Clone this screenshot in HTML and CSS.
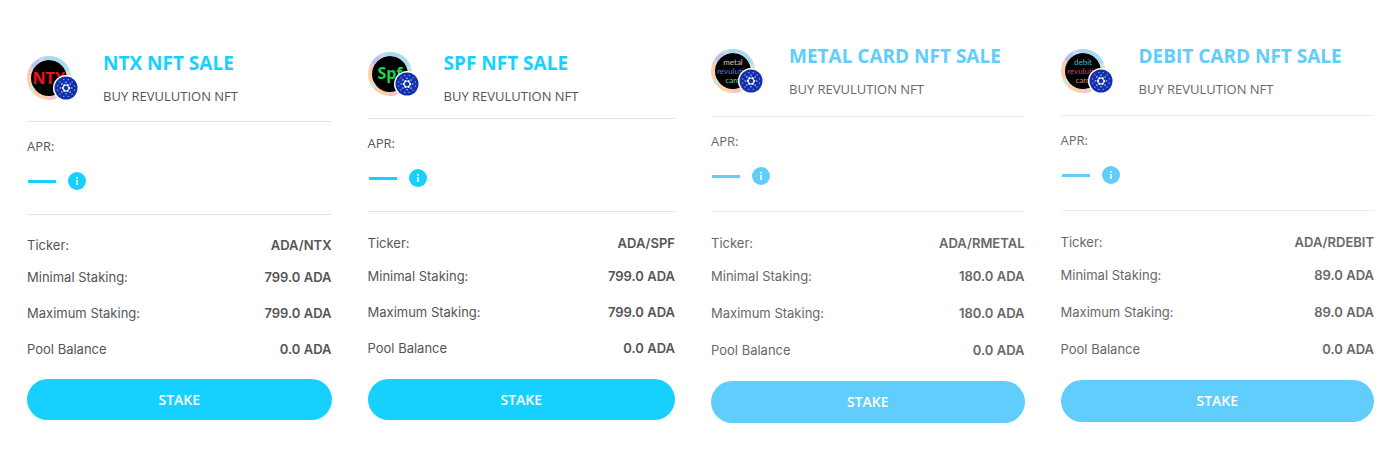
FILE: index.html
```html
<!DOCTYPE html>
<html lang="en">
<head>
<meta charset="utf-8">
<meta name="viewport" content="width=device-width, initial-scale=1">
<title>Revulution NFT sales</title>
<link rel="stylesheet" href="styles.css">
</head>
<body>
<svg class="sprite" aria-hidden="true">
  <symbol id="disc" viewBox="0 0 44 44">
    <circle cx="22" cy="22" r="20" fill="#000"/>
    <g fill="none" stroke-width="4">
      <circle cx="22" cy="22" r="20" stroke="#fbcfa9"/>
      <circle cx="22" cy="22" r="20" pathLength="100" stroke="#a6dcf3" stroke-dasharray="25 75" stroke-dashoffset="-69"/>
      <circle cx="22" cy="22" r="20" pathLength="100" stroke="#b3c4f1" stroke-dasharray="8 92" stroke-dashoffset="-59"/>
      <circle cx="22" cy="22" r="20" pathLength="100" stroke="#f3c3df" stroke-dasharray="3 97" stroke-dashoffset="-55"/>
      <circle cx="22" cy="22" r="20" pathLength="100" stroke="#c4ecd9" stroke-dasharray="4 96" stroke-dashoffset="-39"/>
      <circle cx="22" cy="22" r="20" pathLength="100" stroke="#f0c2dc" stroke-dasharray="5 95" stroke-dashoffset="-20"/>
      <circle cx="22" cy="22" r="20" pathLength="100" stroke="#bfeadf" stroke-dasharray="3 97" stroke-dashoffset="-94"/>
      <circle cx="22" cy="22" r="20" pathLength="100" stroke="#c9d6f4" stroke-dasharray="4 96" stroke-dashoffset="-67"/>
    </g>
  </symbol>
  <symbol id="cardano" viewBox="0 0 26 26">
    <circle cx="13" cy="13" r="13" fill="#fff"/>
    <circle cx="13" cy="13" r="11.5" fill="#1130ad"/>
    <g fill="none" stroke="#fff" stroke-linecap="round">
      <circle cx="13" cy="13" r="3.2" stroke-width="2.2" pathLength="60" stroke-dasharray="0.1 9.9"/>
      <circle cx="13" cy="13" r="3" stroke-width="1.2" opacity=".7"/>
      <circle cx="13" cy="13" r="5.8" stroke-width="1.4" pathLength="80" stroke-dasharray="0.1 9.9" opacity=".85"/>
      <circle cx="13" cy="13" r="8.6" stroke-width="1.2" pathLength="120" stroke-dasharray="0.1 9.9" stroke-dashoffset="5" opacity=".7"/>
    </g>
  </symbol>
  <symbol id="info" viewBox="0 0 18 18">
    <circle cx="9" cy="9" r="9" fill="currentColor"/>
    <circle cx="9" cy="5.8" r="1" fill="#fff"/>
    <path d="M8 8h1.8v5H8.3V9H8z" fill="#fff"/>
  </symbol>
</svg>

<main class="pools">
  <article class="card card--ntx">
    <header class="card__head">
      <svg class="logo" viewBox="0 0 52 46" role="img" aria-label="NTX on Cardano">
        <use href="#disc" width="44" height="44"/>
        <text class="logo__ntx" x="22" y="28">NTX</text>
        <use href="#cardano" x="26" y="19" width="26" height="26"/>
      </svg>
      <div class="card__names">
        <h2 class="card__title">NTX NFT SALE</h2>
        <p class="card__sub">BUY REVULUTION NFT</p>
      </div>
    </header>
    <section class="apr">
      <p class="apr__label">APR:</p>
      <div class="apr__value">
        <span class="apr__dash"></span>
        <button class="apr__info" type="button" aria-label="About APR"><svg class="apr__icon"><use href="#info"/></svg></button>
      </div>
    </section>
    <dl class="facts">
      <div class="fact"><dt>Ticker:</dt><dd>ADA/NTX</dd></div>
      <div class="fact"><dt>Minimal Staking:</dt><dd>799.0 ADA</dd></div>
      <div class="fact"><dt>Maximum Staking:</dt><dd>799.0 ADA</dd></div>
      <div class="fact"><dt>Pool Balance</dt><dd>0.0 ADA</dd></div>
    </dl>
    <button class="stake" type="button">STAKE</button>
  </article>

  <article class="card card--spf">
    <header class="card__head">
      <svg class="logo" viewBox="0 0 52 46" role="img" aria-label="SPF on Cardano">
        <use href="#disc" width="44" height="44"/>
        <text class="logo__spf" x="22" y="27">Spf</text>
        <use href="#cardano" x="26" y="19" width="26" height="26"/>
      </svg>
      <div class="card__names">
        <h2 class="card__title">SPF NFT SALE</h2>
        <p class="card__sub">BUY REVULUTION NFT</p>
      </div>
    </header>
    <section class="apr">
      <p class="apr__label">APR:</p>
      <div class="apr__value">
        <span class="apr__dash"></span>
        <button class="apr__info" type="button" aria-label="About APR"><svg class="apr__icon"><use href="#info"/></svg></button>
      </div>
    </section>
    <dl class="facts">
      <div class="fact"><dt>Ticker:</dt><dd>ADA/SPF</dd></div>
      <div class="fact"><dt>Minimal Staking:</dt><dd>799.0 ADA</dd></div>
      <div class="fact"><dt>Maximum Staking:</dt><dd>799.0 ADA</dd></div>
      <div class="fact"><dt>Pool Balance</dt><dd>0.0 ADA</dd></div>
    </dl>
    <button class="stake" type="button">STAKE</button>
  </article>

  <article class="card card--soft card--metal">
    <header class="card__head">
      <svg class="logo" viewBox="0 0 52 46" role="img" aria-label="Metal card on Cardano">
        <use href="#disc" width="44" height="44"/>
        <g class="logo__lines">
          <text x="22" y="16" fill="#c9c9c9">metal</text>
          <text x="24" y="25" fill="#4d7fe0">revulution</text>
          <text x="22" y="34" fill="#5fd0a5">card</text>
        </g>
        <use href="#cardano" x="27" y="19" width="26" height="26"/>
      </svg>
      <div class="card__names">
        <h2 class="card__title">METAL CARD NFT SALE</h2>
        <p class="card__sub">BUY REVULUTION NFT</p>
      </div>
    </header>
    <section class="apr">
      <p class="apr__label">APR:</p>
      <div class="apr__value">
        <span class="apr__dash"></span>
        <button class="apr__info" type="button" aria-label="About APR"><svg class="apr__icon"><use href="#info"/></svg></button>
      </div>
    </section>
    <dl class="facts">
      <div class="fact"><dt>Ticker:</dt><dd>ADA/RMETAL</dd></div>
      <div class="fact"><dt>Minimal Staking:</dt><dd>180.0 ADA</dd></div>
      <div class="fact"><dt>Maximum Staking:</dt><dd>180.0 ADA</dd></div>
      <div class="fact"><dt>Pool Balance</dt><dd>0.0 ADA</dd></div>
    </dl>
    <button class="stake" type="button">STAKE</button>
  </article>

  <article class="card card--soft card--debit">
    <header class="card__head">
      <svg class="logo" viewBox="0 0 52 46" role="img" aria-label="Debit card on Cardano">
        <use href="#disc" width="44" height="44"/>
        <g class="logo__lines">
          <text x="22" y="16" fill="#3fb4dc">debit</text>
          <text x="24" y="25" fill="#c8407f">revulution</text>
          <text x="22" y="34" fill="#d98a45">card</text>
        </g>
        <use href="#cardano" x="27" y="19" width="26" height="26"/>
      </svg>
      <div class="card__names">
        <h2 class="card__title">DEBIT CARD NFT SALE</h2>
        <p class="card__sub">BUY REVULUTION NFT</p>
      </div>
    </header>
    <section class="apr">
      <p class="apr__label">APR:</p>
      <div class="apr__value">
        <span class="apr__dash"></span>
        <button class="apr__info" type="button" aria-label="About APR"><svg class="apr__icon"><use href="#info"/></svg></button>
      </div>
    </section>
    <dl class="facts">
      <div class="fact"><dt>Ticker:</dt><dd>ADA/RDEBIT</dd></div>
      <div class="fact"><dt>Minimal Staking:</dt><dd>89.0 ADA</dd></div>
      <div class="fact"><dt>Maximum Staking:</dt><dd>89.0 ADA</dd></div>
      <div class="fact"><dt>Pool Balance</dt><dd>0.0 ADA</dd></div>
    </dl>
    <button class="stake" type="button">STAKE</button>
  </article>
</main>
</body>
</html>
```
FILE: styles.css
```css
* {
  box-sizing: border-box;
}

body,
h2,
p,
dl,
dd {
  margin: 0;
}

body {
  background: #fff;
  font-family: "Open Sans", sans-serif;
}

button {
  border: 0;
  padding: 0;
  font: inherit;
  cursor: pointer;
}

.sprite {
  position: absolute;
  width: 0;
  height: 0;
}

.pools {
  display: grid;
  grid-template-columns: 305fr 308fr 314fr 314fr;
  gap: 36px;
  align-items: start;
  padding: 43px 26px 40px 27px;
}

.card {
  --accent: #16d1ff;
  --text: #555;
  --line: #e4e4e4;
  display: flex;
  flex-direction: column;
  padding-top: 7px;
  color: var(--text);
  font-size: 13px;
  line-height: 20px;
}

.card--soft {
  --accent: #60cdfc;
  --text: #686868;
  --line: #ececec;
  padding-top: 0;
}

.card__head {
  display: flex;
  align-items: flex-start;
  gap: 24px;
  padding-bottom: 15px;
  border-bottom: 1px solid var(--line);
}

.card--spf .card__head {
  padding-bottom: 12px;
}

.card--metal .card__head {
  padding-bottom: 17px;
}

.card--debit .card__head {
  padding-bottom: 16px;
}

.card--soft .card__head {
  gap: 26px;
}

.logo {
  flex: none;
  width: 52px;
  height: 46px;
  margin-top: 6px;
  overflow: visible;
  text-anchor: middle;
}

.card--spf .logo {
  margin-top: 2px;
}

.logo__ntx {
  fill: #f0101c;
  font-size: 16px;
  font-weight: 700;
}

.logo__spf {
  fill: #17d64b;
  font-size: 16px;
  font-weight: 700;
}

.logo__lines {
  font-family: Lato, sans-serif;
  font-size: 8px;
}

.card__names {
  display: grid;
  gap: 10px;
}

.card__title {
  color: var(--accent);
  font-size: 19px;
  font-weight: 700;
  line-height: 26px;
}

.apr {
  display: grid;
  gap: 15px;
  padding: 14px 0 23px;
  border-bottom: 1px solid var(--line);
}

.card--soft .apr {
  padding-bottom: 25px;
}

.apr__value {
  display: flex;
  align-items: center;
  gap: 12px;
  height: 20px;
  padding-left: 1px;
  color: var(--accent);
}

.apr__dash {
  width: 28px;
  height: 3px;
  background: currentColor;
}

.apr__info {
  display: flex;
  background: none;
  color: inherit;
}

.apr__icon {
  width: 18px;
  height: 18px;
}

.facts {
  display: grid;
  gap: 16px;
  padding: 20px 0;
  font-family: Inter, sans-serif;
}

.fact {
  display: flex;
  justify-content: space-between;
}

.fact:first-child {
  margin-bottom: -4px;
}

.fact dd {
  font-weight: 600;
}

.card--soft .facts {
  gap: 17px;
  padding: 21px 0;
}

.card--spf .facts {
  padding: 21px 0;
}

.card--spf .fact:first-child {
  margin-bottom: -3px;
}

.stake {
  height: 41px;
  border-radius: 21px;
  background: var(--accent);
  color: #fff;
  font-size: 14px;
  font-weight: 600;
}

.card--soft .stake {
  height: 42px;
}
```
